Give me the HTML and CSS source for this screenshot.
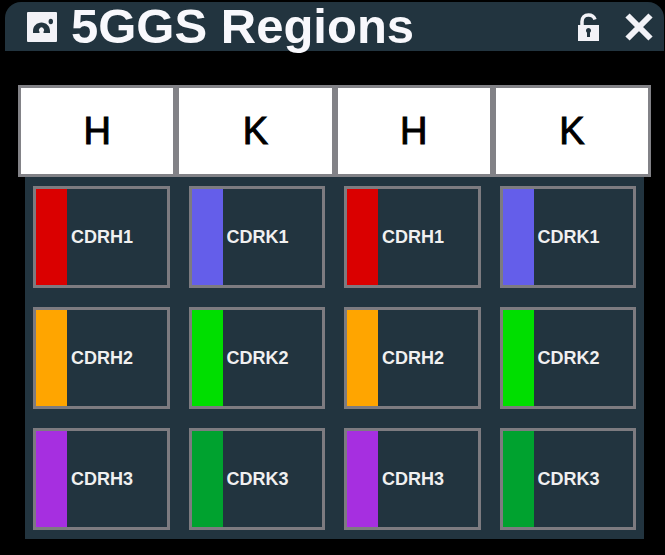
FILE: index.html
```html
<!DOCTYPE html>
<html lang="en">
<head>
    <meta charset="UTF-8">
    <meta name="viewport" content="width=device-width, initial-scale=1.0">
    <title>5GGS Regions</title>
    <link rel="stylesheet" href="styles.css">
</head>
<body>
    <header class="title-bar">
        <svg class="logo" viewBox="0 0 30 30" aria-hidden="true">
            <rect width="30" height="30" rx="1" fill="#f2f2f7"/>
            <path d="M6 21V19C6 14 10 10.500 14.500 10.500S23 14 23 19v2h-6.500v-1.300a2.600 2.600 0 1 0-4 0V21z" fill="#22343f"/>
            <ellipse cx="23.800" cy="9.500" rx="2.200" ry="2.700" fill="#22343f"/>
        </svg>
        <h1>5GGS Regions</h1>
        <button type="button" class="icon-button" aria-label="Unlock">
            <svg width="21" height="28" viewBox="0 0 21 28">
                <path d="M4 13V8.500C4 4.500 6.500 2 10.500 2c3 0 5.500 1.500 6.500 4.500" fill="none" stroke="#f2f2f7" stroke-width="3.500"/>
                <path d="M0 12h21v16H0z" fill="#f2f2f7"/>
                <path d="M10.500 15a2.600 2.600 0 0 1 1.500 4.700V24H9v-4.300A2.600 2.600 0 0 1 10.500 15z" fill="#22343f"/>
            </svg>
        </button>
        <button type="button" class="icon-button" aria-label="Close">
            <svg width="28" height="28" viewBox="0 0 28 28">
                <path d="M2.500 2.500l23 23M25.500 2.500l-23 23" stroke="#f2f2f7" stroke-width="6"/>
            </svg>
        </button>
    </header>

    <main>
        <div class="chains">
            <button type="button">H</button>
            <button type="button">K</button>
            <button type="button">H</button>
            <button type="button">K</button>
        </div>
        <div class="regions">
            <button type="button" class="region red">CDRH1</button>
            <button type="button" class="region blue">CDRK1</button>
            <button type="button" class="region red">CDRH1</button>
            <button type="button" class="region blue">CDRK1</button>

            <button type="button" class="region orange">CDRH2</button>
            <button type="button" class="region lime">CDRK2</button>
            <button type="button" class="region orange">CDRH2</button>
            <button type="button" class="region lime">CDRK2</button>

            <button type="button" class="region purple">CDRH3</button>
            <button type="button" class="region green">CDRK3</button>
            <button type="button" class="region purple">CDRH3</button>
            <button type="button" class="region green">CDRK3</button>
        </div>
    </main>
</body>
</html>
```
FILE: styles.css
```css
* {
    box-sizing: border-box;
}

body {
    margin: 0;
    padding: 2px 1px 16px 5px;
    background-color: #000;
    font-family: "Liberation Sans", Arial, sans-serif;
}

button {
    padding: 0;
    font-family: inherit;
    cursor: pointer;
}

.title-bar {
    display: flex;
    align-items: center;
    height: 49px;
    padding: 0 11px 0 22px;
    background-color: #22343f;
    border-radius: 16px 16px 0 0;
}

.logo {
    width: 30px;
    height: 30px;
    margin-right: 14px;
}

h1 {
    flex: 1;
    margin: 0;
    color: #f8f8fc;
    font-size: 49px;
    line-height: 49px;
    white-space: nowrap;
}

.icon-button {
    display: flex;
    margin-left: 26px;
    border: none;
    background: none;
}

main {
    margin: 34px 13px 0 13px;
}

.chains {
    display: grid;
    grid-template-columns: repeat(4, 1fr);
}

.chains button {
    height: 92px;
    border: 3px solid #828287;
    background-color: #fff;
    color: #000;
    font-size: 38px;
    -webkit-text-stroke: 1px #000;
}

.regions {
    display: grid;
    grid-template-columns: repeat(4, 1fr);
    gap: 19px;
    margin: 0 7px;
    padding: 9px 8px;
    background-color: #22343f;
}

.region {
    display: flex;
    align-items: center;
    gap: 4px;
    height: 102px;
    border: 3px solid #7d7b80;
    background-color: transparent;
    color: #f0f0f0;
    font-size: 18px;
    font-weight: bold;
}

.region::before {
    content: "";
    width: 31px;
    height: 100%;
}

.red::before {
    background-color: #da0000;
}

.blue::before {
    background-color: #645eea;
}

.orange::before {
    background-color: #ffa500;
}

.lime::before {
    background-color: #00de00;
}

.purple::before {
    background-color: #a62fe0;
}

.green::before {
    background-color: #00a22f;
}
```
